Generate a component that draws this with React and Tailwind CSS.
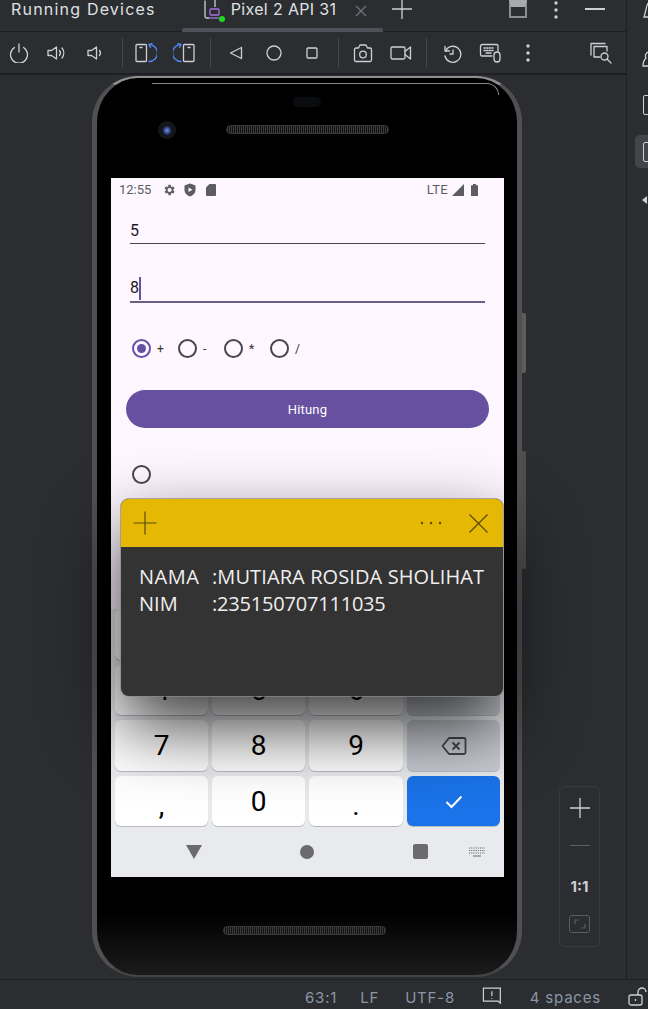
import React from 'react';

const IDE = '#ced0d6';
const BLUE = '#548af7';

const Svg = ({ w = 20, h = 20, children, className = '' }) => (
  <svg width={w} height={h} viewBox={`0 0 ${w} ${h}`} fill="none" stroke={IDE} strokeWidth="1.3" strokeLinecap="round" strokeLinejoin="round" className={className}>
    {children}
  </svg>
);

const ToolBtn = ({ children }) => (
  <div className="w-[38px] h-full flex items-center justify-center shrink-0">{children}</div>
);

const Sep = ({ ml, mr }) => <div className={`w-px h-[30px] bg-[#43454a] shrink-0 ${ml} ${mr}`} />;

const Radio = ({ checked, className = '' }) => (
  <span className={`w-[19px] h-[19px] rounded-full border-2 flex items-center justify-center shrink-0 ${checked ? 'border-[#6750a4]' : 'border-[#49454f]'} ${className}`}>
    {checked && <span className="w-[9px] h-[9px] rounded-full bg-[#6750a4]" />}
  </span>
);

const RadioItem = ({ label, checked }) => (
  <div className="w-[46px] flex items-center shrink-0">
    <Radio checked={checked} />
    <span className="ml-[6px] text-[12px] text-[#333] font-['Roboto',sans-serif]">{label}</span>
  </div>
);

const Key = ({ children, tone = 'light' }) => (
  <div className={`h-[50.5px] pt-[2px] rounded-[6px] flex items-center justify-center text-[28px] text-black font-['Roboto',sans-serif] shadow-[0_1px_0_#b9bbc0] ${tone === 'light' ? 'bg-white' : tone === 'dark' ? 'bg-[#c8cbd2]' : 'bg-[#1a73e8]'}`}>
    {children}
  </div>
);

const Speaker = ({ className = '' }) => (
  <div className={`w-[163px] h-[9px] rounded-full border border-[#3a3a3a] bg-[repeating-linear-gradient(90deg,#3c3c3c_0,#3c3c3c_1px,#111_1px,#111_2px)] ${className}`} />
);

const StickyNote = () => (
  <div className="absolute left-[121px] top-[424px] w-[382px] h-[197px] rounded-[8px] overflow-hidden bg-[#333333] shadow-[0_0_0_1px_rgba(140,140,140,0.7),0_30px_70px_rgba(0,0,0,0.78)]">
    <div className="h-[48px] bg-[#e5b804] flex items-center pl-[12px] pr-[15px]">
      <svg width="24" height="24" viewBox="0 0 24 24" stroke="#5a4a06" strokeWidth="1.2">
        <path d="M12 0.5V23.5M0.5 12H23.5" />
      </svg>
      <svg className="ml-auto" width="22" height="4" viewBox="0 0 22 4" fill="#5a4a06">
        <circle cx="2" cy="2" r="1.2" />
        <circle cx="11" cy="2" r="1.2" />
        <circle cx="20" cy="2" r="1.2" />
      </svg>
      <svg className="ml-[27px]" width="19" height="19" viewBox="0 0 19 19" stroke="#5a4a06" strokeWidth="1.2">
        <path d="M0.5 0.5L18.5 18.5M18.5 0.5L0.5 18.5" />
      </svg>
    </div>
    <div className="pl-[18px] pt-[16px] grid grid-cols-[73px_1fr] text-[20px] leading-[27px] text-[#efefef] font-['Open_Sans',sans-serif] whitespace-nowrap">
      <span className="tracking-[0.5px]">NAMA</span>
      <span className="tracking-[0.1px]">:MUTIARA ROSIDA SHOLIHAT</span>
      <span>NIM</span>
      <span className="tracking-[-0.2px]">:235150707111035</span>
    </div>
  </div>
);

const PhoneScreen = () => (
  <div className="w-[393px] h-[699px] ml-[14px] mt-[100px] bg-[#fef7ff] flex flex-col overflow-hidden">
    <div className="h-[24px] flex items-center pl-[8px] pr-[26px] text-[#5c5c62] font-['Roboto',sans-serif] text-[13px] shrink-0">
      <span>12:55</span>
      <svg className="ml-[11px]" width="14" height="14" viewBox="0 0 24 24" fill="#5c5c62">
        <path d="M19.4 13a7.6 7.6 0 0 0 0-2l2.1-1.6-2-3.5-2.5 1a7.7 7.7 0 0 0-1.7-1L15 3.2h-4l-.4 2.7a7.7 7.7 0 0 0-1.7 1l-2.5-1-2 3.5L6.6 11a7.6 7.6 0 0 0 0 2l-2.1 1.6 2 3.5 2.5-1c.5.4 1.1.7 1.7 1l.3 2.7h4l.4-2.7c.6-.3 1.2-.6 1.7-1l2.5 1 2-3.5zM13 15.5a3.5 3.5 0 1 1 0-7 3.5 3.5 0 0 1 0 7z" />
      </svg>
      <svg className="ml-[8px]" width="12" height="14" viewBox="0 0 12 14" fill="#5c5c62">
        <path d="M6 0.5L11.5 2.5V7C11.5 10 9 12.6 6 13.5 3 12.6 0.5 10 0.5 7V2.5zM4.5 4.5V9L8.5 6.75z" fillRule="evenodd" />
      </svg>
      <svg className="ml-[10px]" width="10" height="12" viewBox="0 0 10 12" fill="#5c5c62">
        <path d="M3.5 0H9a1 1 0 0 1 1 1v10a1 1 0 0 1-1 1H1a1 1 0 0 1-1-1V3.5z" />
      </svg>
      <span className="ml-auto text-[13px] tracking-[0.3px]">LTE</span>
      <svg className="ml-[4px]" width="12" height="12" viewBox="0 0 12 12" fill="#5c5c62">
        <path d="M12 0V12H0z" />
      </svg>
      <svg className="ml-[7px]" width="7" height="12" viewBox="0 0 7 12" fill="#5c5c62">
        <path d="M2 0H5V1.2H7V12H0V1.2H2z" />
      </svg>
    </div>

    <div className="ml-[19px] w-[355px] h-[42px] border-b border-[#49454f] flex items-end text-[16px] leading-[24px] text-[#1d1b20] font-['Roboto',sans-serif] shrink-0">5</div>
    <div className="ml-[19px] w-[355px] h-[59px] border-b-2 border-[#6b5f82] flex items-end pb-[1px] text-[16px] leading-[24px] text-[#1d1b20] font-['Roboto',sans-serif] shrink-0">
      8<span className="w-[1.5px] h-[23px] bg-[#6750a4]" />
    </div>

    <div className="mt-[35px] ml-[21px] h-[21px] flex items-center shrink-0">
      <RadioItem label="+" checked />
      <RadioItem label="-" />
      <RadioItem label="*" />
      <RadioItem label="/" />
    </div>

    <div className="mt-[31px] ml-[15px] w-[363px] h-[38px] pt-[1px] rounded-full bg-[#67509f] flex items-center justify-center text-white text-[13px] tracking-[0.2px] font-['Roboto',sans-serif] shrink-0">Hitung</div>

    <Radio className="mt-[37px] ml-[21px]" />

    <div className="mt-auto bg-[#e8eaed] shrink-0">
      <div className="px-[4px] grid grid-cols-[93px_93px_94px_93px] gap-x-[4px] gap-y-[5px]">
        <Key>1</Key>
        <Key>2</Key>
        <Key>3</Key>
        <Key tone="dark">-</Key>
        <Key>4</Key>
        <Key>5</Key>
        <Key>6</Key>
        <Key tone="dark" />
        <Key>7</Key>
        <Key>8</Key>
        <Key>9</Key>
        <Key tone="dark">
          <svg width="26" height="20" viewBox="0 0 26 20" fill="none" stroke="#45474b" strokeWidth="1.8" strokeLinejoin="round">
            <path d="M8 2H23a1.5 1.5 0 0 1 1.5 1.5v13A1.5 1.5 0 0 1 23 18H8L1.5 10z" />
            <path d="M11.5 6.5L18.5 13.5M18.5 6.5L11.5 13.5" />
          </svg>
        </Key>
        <Key><span className="mt-[8px]">,</span></Key>
        <Key>0</Key>
        <Key><span className="mt-[8px]">.</span></Key>
        <Key tone="blue">
          <svg width="18" height="14" viewBox="0 0 18 14" fill="none" stroke="#fff" strokeWidth="2">
            <path d="M1.5 7L6.5 12L16.5 1.5" />
          </svg>
        </Key>
      </div>
      <div className="h-[51px] flex items-center">
        <svg className="ml-[75px]" width="16" height="14" viewBox="0 0 16 14" fill="#6b6b6e"><path d="M0 0H16L8 14z" /></svg>
        <span className="ml-[98px] w-[14px] h-[14px] rounded-full bg-[#6b6b6e]" />
        <span className="ml-[99px] w-[15px] h-[15px] rounded-[2px] bg-[#6b6b6e]" />
        <svg className="ml-[41px]" width="16" height="10" viewBox="0 0 16 10" stroke="#6b6b6e" strokeWidth="1" strokeDasharray="1.2 1">
          <path d="M0 1H16M0 3.5H16M0 6H16" />
          <path d="M4 9H12" strokeDasharray="none" />
        </svg>
      </div>
    </div>
  </div>
);

const Phone = () => (
  <div className="relative w-[430px] h-[901px] ml-[92px] mt-px rounded-[46px] border-t-[2px] border-x-[5px] border-b-[2px] border-t-[#8e8e8e] border-x-[#505052] border-b-[#444] bg-[linear-gradient(180deg,#000_0%,#000_93%,#1b1b1c_100%)] flex flex-col">
    <PhoneScreen />
    <div className="absolute left-[55px] right-[18px] top-[5px] h-[12px] rounded-tr-[36px] border-t border-r border-[#c4c4c4]/70" />
    <div className="absolute top-[19px] left-[196px] w-[28px] h-[10px] rounded-full bg-[#0b0c10]" />
    <div className="absolute left-[61px] top-[43px] w-[18px] h-[18px] rounded-full bg-[#15161a] flex items-center justify-center">
      <span className="w-[8px] h-[9px] rounded-full bg-[radial-gradient(circle,#7d93e6_0%,#24366e_60%,#0a0e20_100%)]" />
    </div>
    <Speaker className="absolute left-[129px] top-[47px]" />
    <Speaker className="absolute left-[126px] top-[848px]" />
    <div className="absolute right-[-9px] top-[235px] w-[4px] h-[60px] bg-[#5c5c5c] rounded-r-[2px]" />
    <div className="absolute right-[-9px] top-[373px] w-[4px] h-[118px] bg-[#4e4e4e] rounded-r-[2px]" />
  </div>
);

const TabBar = () => (
  <div className="h-[32px] border-b border-[#1e1f22] flex items-start relative shrink-0 font-['Inter',sans-serif] text-[#dfe1e5]">
    <span className="ml-[11px] text-[16px] leading-[19px] tracking-[1.2px] whitespace-nowrap">Running Devices</span>
    <div className="ml-[47px] relative w-[19px] h-[22px] shrink-0">
      <svg width="19" height="22" viewBox="0 0 19 22" fill="none" strokeWidth="1.3">
        <path d="M2 0.5V16.5A1.5 1.5 0 0 0 3.5 18H6M12 0V7" stroke={IDE} />
        <rect x="7" y="9" width="9" height="6" rx="1" stroke="#a571e6" />
        <path d="M6 18H16" stroke="#a571e6" />
      </svg>
      <span className="absolute right-[-3px] bottom-[0px] w-[6px] h-[6px] rounded-full bg-[#22d81f]" />
    </div>
    <span className="ml-[9px] text-[16px] leading-[19px] tracking-[0.35px] whitespace-nowrap">Pixel 2 API 31</span>
    <svg className="ml-[18px] mt-[4px]" width="14" height="14" viewBox="0 0 14 14" stroke="#6f737a" strokeWidth="1.4"><path d="M2 2L12 12M12 2L2 12" /></svg>
    <svg className="ml-[24px] mt-[-1px]" width="20" height="20" viewBox="0 0 20 20" stroke={IDE} strokeWidth="1.3"><path d="M10 0V20M0 10H20" /></svg>
    <div className="absolute left-[182px] top-[28px] w-[201px] h-[4px] rounded-t-[2px] bg-[#4e5157]" />
    <div className="ml-auto flex items-start">
      <div className="w-[18px] h-[18px] border-2 border-[#8b8d92] border-t-[7px] border-t-[#a8aaae]" />
      <svg className="ml-[27px]" width="4" height="20" viewBox="0 0 4 20" fill={IDE}>
        <circle cx="2" cy="3" r="1.7" /><circle cx="2" cy="10" r="1.7" /><circle cx="2" cy="17" r="1.7" />
      </svg>
      <div className="ml-[27px] mr-[21px] mt-[8px] w-[20px] h-[1.5px] bg-[#ced0d6]" />
    </div>
  </div>
);

const ToolBar = () => (
  <div className="h-[43px] border-b-2 border-[#1e1f22] flex items-center shrink-0">
    <ToolBtn>
      <Svg>
        <path d="M5.5 4.5A8.5 8.5 0 1 0 14.5 4.5" /><path d="M10 1V9" />
      </Svg>
    </ToolBtn>
    <ToolBtn>
      <Svg>
        <path d="M1 7.5V12.5H4.5L9.5 16V4L4.5 7.5z" /><path d="M12.5 7.5a4 4 0 0 1 0 5" /><path d="M15 5a8 8 0 0 1 0 10" />
      </Svg>
    </ToolBtn>
    <ToolBtn>
      <Svg>
        <path d="M3 7.5V12.5H6.5L11.5 16V4L6.5 7.5z" /><path d="M14.5 7.5a4 4 0 0 1 0 5" />
      </Svg>
    </ToolBtn>
    <Sep ml="ml-[8px]" mr="mr-[4px]" />
    <ToolBtn>
      <Svg w={22} h={20}>
        <rect x="1" y="1.5" width="10.5" height="17" rx="1" /><path d="M5 4.5H7" />
        <path d="M14 1.5a8.5 8.5 0 0 1 0 17" stroke={BLUE} /><path d="M14 1.5L17 0.5M14 1.5L15.5 4.5" stroke={BLUE} />
      </Svg>
    </ToolBtn>
    <ToolBtn>
      <Svg w={22} h={20}>
        <rect x="10.5" y="1.5" width="10.5" height="17" rx="1" /><path d="M15 4.5H17" />
        <path d="M8 1.5a8.5 8.5 0 0 0 0 17" stroke={BLUE} /><path d="M8 1.5L5 0.5M8 1.5L6.5 4.5" stroke={BLUE} />
      </Svg>
    </ToolBtn>
    <Sep ml="ml-[7px]" mr="mr-[6px]" />
    <ToolBtn><Svg w={14} h={14}><path d="M12.5 1.5V12.5L1.5 7z" /></Svg></ToolBtn>
    <ToolBtn><Svg w={16} h={16}><circle cx="8" cy="8" r="7" /></Svg></ToolBtn>
    <ToolBtn><Svg w={12} h={12}><rect x="1" y="1" width="10" height="10" rx="1" /></Svg></ToolBtn>
    <Sep ml="ml-[7px]" mr="mr-[5px]" />
    <ToolBtn>
      <Svg w={22} h={20}>
        <path d="M2.5 6.5A1.5 1.5 0 0 1 4 5H6.5L8 2H14L15.5 5H18A1.5 1.5 0 0 1 19.5 6.5V17A1.5 1.5 0 0 1 18 18.5H4A1.5 1.5 0 0 1 2.5 17z" /><circle cx="11" cy="11.5" r="3.3" />
      </Svg>
    </ToolBtn>
    <ToolBtn>
      <Svg w={22} h={16}>
        <rect x="1" y="2" width="14" height="12" rx="1.5" /><path d="M15 6.5L20.5 2V14L15 9.5" />
      </Svg>
    </ToolBtn>
    <Sep ml="ml-[6px]" mr="mr-[6px]" />
    <ToolBtn>
      <Svg w={20} h={20}>
        <path d="M3 3.5V8H7.5" /><path d="M3.5 8A8 8 0 1 1 3 13" /><path d="M11 7V11H8" />
      </Svg>
    </ToolBtn>
    <ToolBtn>
      <Svg w={22} h={20}>
        <path d="M13 13H3A1.5 1.5 0 0 1 1.5 11.5V3A1.5 1.5 0 0 1 3 1.5H17.5A1.5 1.5 0 0 1 19 3V8" />
        <path d="M5 5H15M5 7.5H15" strokeDasharray="1.3 1.3" /><path d="M7 10H12" />
        <rect x="15" y="9" width="6" height="10" rx="3" />
      </Svg>
    </ToolBtn>
    <ToolBtn>
      <svg width="4" height="20" viewBox="0 0 4 20" fill={IDE}>
        <circle cx="2" cy="3" r="1.7" /><circle cx="2" cy="10" r="1.7" /><circle cx="2" cy="17" r="1.7" />
      </svg>
    </ToolBtn>
    <div className="ml-[35px]">
      <ToolBtn>
        <Svg w={22} h={22}>
          <path d="M1 1.5H15M1 1.5V13" />
          <path d="M4 4.5H17V9M4 4.5V15H10" /><circle cx="14.5" cy="14.5" r="3.5" /><path d="M17 17L21 21" />
        </Svg>
      </ToolBtn>
    </div>
  </div>
);

const ZoomControl = () => (
  <div className="absolute left-[559px] top-[711px] w-[41px] h-[161px] rounded-[6px] border border-[#393b40] flex flex-col items-center">
    <svg className="mt-[11px] shrink-0" width="20" height="20" viewBox="0 0 20 20" stroke={IDE} strokeWidth="1.3"><path d="M10 0V20M0 10H20" /></svg>
    <div className="mt-[27px] w-[20px] h-px bg-[#5a5d63] shrink-0" />
    <span className="mt-[32px] text-[15px] leading-[18px] font-bold text-[#ced0d6] font-['Inter',sans-serif]">1:1</span>
    <div className="mt-[19px] w-[21px] h-[18px] rounded-[3px] border border-[#5a5d63] flex items-center justify-center shrink-0">
      <svg width="12" height="10" viewBox="0 0 12 10" fill="none" stroke="#5a5d63" strokeWidth="1.2"><path d="M1 5V1H5M11 5V9H7" /></svg>
    </div>
  </div>
);

const SideBar = () => (
  <div className="w-[22px] border-l border-[#1e1f22] flex flex-col overflow-hidden shrink-0">
    <svg className="ml-[16px] mt-[2px] shrink-0" width="6" height="16" viewBox="0 0 6 16" fill="none" stroke={IDE} strokeWidth="1.3"><path d="M5 1C3 4 3 10 1 15H6" /></svg>
    <svg className="ml-[15px] mt-[33px] shrink-0" width="7" height="16" viewBox="0 0 7 16" fill="none" stroke={IDE} strokeWidth="1.3"><path d="M7 1A4 4 0 0 0 4 7C2 9 1 12 1 15H7" /></svg>
    <div className="ml-[16px] mt-[28px] w-[10px] h-[20px] rounded-[2px] border border-[#ced0d6] shrink-0" />
    <div className="ml-[8px] mt-[20px] w-[20px] h-[33px] rounded-[5px] bg-[#43454a] flex items-center pl-[8px] shrink-0">
      <div className="w-[10px] h-[20px] rounded-[2px] border border-[#ced0d6]" />
    </div>
    <svg className="ml-[15px] mt-[28px] shrink-0" width="7" height="8" viewBox="0 0 7 8" fill={IDE}><path d="M0 4L5 0V8z" /></svg>
  </div>
);

const StatusBar = () => (
  <div className="h-[30px] pt-[7px] border-t border-[#1e1f22] flex items-center text-[15px] text-[#8a97a6] font-['Inter',sans-serif] tracking-[0.8px] shrink-0 whitespace-nowrap">
    <span className="ml-[305px]">63:1</span>
    <span className="ml-[23px]">LF</span>
    <span className="ml-[26px]">UTF-8</span>
    <svg className="ml-[27px] mt-[-3px]" width="21" height="21" viewBox="0 0 21 21" fill="none" stroke={IDE} strokeWidth="1.3">
      <path d="M1.5 1.5H19.5V17.5L17 15.5H1.5z" /><path d="M10.5 5V10M10.5 12V13" />
    </svg>
    <span className="ml-[28px]">4 spaces</span>
    <svg className="ml-[27px] mt-[-3px] shrink-0" width="20" height="20" viewBox="0 0 20 20" fill="none" stroke={IDE} strokeWidth="1.3">
      <rect x="1" y="8" width="13" height="10" rx="2" /><path d="M7.5 12V14" /><path d="M10 8V5A4 4 0 0 1 18 5" />
    </svg>
  </div>
);

export default function App() {
  return (
    <div className="w-[648px] h-[1009px] bg-[#2b2d30] flex flex-col overflow-hidden">
      <div className="h-[979px] flex shrink-0">
        <div className="w-[626px] flex flex-col shrink-0">
          <TabBar />
          <ToolBar />
          <div className="relative flex-1">
            <Phone />
            <ZoomControl />
            <StickyNote />
          </div>
        </div>
        <SideBar />
      </div>
      <StatusBar />
    </div>
  );
}
